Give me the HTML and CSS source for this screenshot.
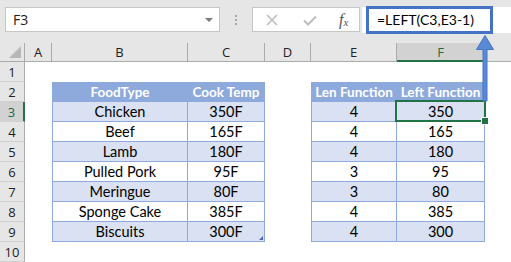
FILE: index.html
```html
<!DOCTYPE html>
<html>
<head>
<meta charset="utf-8">
<link rel="stylesheet" href="styles.css">
</head>
<body>
<div class="app">
  <div class="toolbar">
    <div class="namebox"><span class="nb-text">F3</span><span class="nb-caret"></span></div>
    <div class="dots"><i></i><i></i><i></i></div>
    <div class="fbuttons">
      <svg class="ico-x" width="12" height="12" viewBox="0 0 12 12"><path d="M1 1 L11 11 M11 1 L1 11" stroke="#bdbdbd" stroke-width="1.6" fill="none"/></svg>
      <svg class="ico-check" width="14" height="11" viewBox="0 0 14 11"><path d="M1 5.5 L5 9.5 L13 1.5" stroke="#bdbdbd" stroke-width="2" fill="none"/></svg>
      <span class="fx">f<sub>x</sub></span>
    </div>
    <div class="finput">
      <div class="fbox">=LEFT(C3,E3-1)</div>
    </div>
  </div>
  <div class="sheet">
    <div class="corner"><span class="tri"></span></div>
    <div class="ch">A</div>
    <div class="ch">B</div>
    <div class="ch">C</div>
    <div class="ch">D</div>
    <div class="ch">E</div>
    <div class="ch ch-sel">F</div>
    <div class="ch ch-last"></div>

    <div class="rh">1</div><div></div><div></div><div></div><div></div><div></div><div></div><div></div>

    <div class="rh">2</div><div></div>
    <div class="t th tl">FoodType</div><div class="t th">Cook Temp</div><div></div>
    <div class="t th tl">Len Function</div><div class="t th">Left Function</div><div></div>

    <div class="rh rh-sel">3</div><div></div>
    <div class="t band tl">Chicken</div><div class="t band">350F</div><div></div>
    <div class="t band tl">4</div><div class="t band sel">350</div><div></div>

    <div class="rh">4</div><div></div>
    <div class="t tl">Beef</div><div class="t">165F</div><div></div>
    <div class="t tl">4</div><div class="t">165</div><div></div>

    <div class="rh">5</div><div></div>
    <div class="t band tl">Lamb</div><div class="t band">180F</div><div></div>
    <div class="t band tl">4</div><div class="t band">180</div><div></div>

    <div class="rh">6</div><div></div>
    <div class="t tl">Pulled Pork</div><div class="t">95F</div><div></div>
    <div class="t tl">3</div><div class="t">95</div><div></div>

    <div class="rh">7</div><div></div>
    <div class="t band tl">Meringue</div><div class="t band">80F</div><div></div>
    <div class="t band tl">3</div><div class="t band">80</div><div></div>

    <div class="rh">8</div><div></div>
    <div class="t tl">Sponge Cake</div><div class="t">385F</div><div></div>
    <div class="t tl">4</div><div class="t">385</div><div></div>

    <div class="rh">9</div><div></div>
    <div class="t band tl">Biscuits</div><div class="t band corner-h">300F</div><div></div>
    <div class="t band tl">4</div><div class="t band">300</div><div></div>

    <div class="rh">10</div><div></div><div></div><div></div><div></div><div></div><div></div><div></div>
  </div>
  <svg class="arrow" width="20" height="70" viewBox="0 0 20 70">
    <path d="M10 0.5 L18.5 14.5 L12 14.5 L12 66 L8 66 L8 14.5 L1.5 14.5 Z" fill="#5a8ad5" stroke="#4472c4" stroke-width="1"/>
  </svg>
</div>
</body>
</html>
```
FILE: styles.css
```css
* { box-sizing: border-box; }
html, body { margin: 0; padding: 0; }
body { width: 511px; height: 262px; overflow: hidden; background: #fff; }
.app { position: relative; width: 511px; height: 262px; font-family: "Open Sans", "Noto Sans", sans-serif; }

.toolbar {
  height: 43px;
  background: #e6e6e6;
  display: flex;
  align-items: flex-start;
  padding-top: 7px;
}
.namebox {
  margin-left: 5px;
  width: 215px;
  height: 25px;
  background: #fff;
  border: 1px solid #c6c6c6;
  display: flex;
  align-items: center;
  justify-content: space-between;
  padding: 0 6px 0 7px;
}
.nb-text { font-size: 14px; color: #222; }
.nb-caret {
  width: 0; height: 0;
  border-left: 4px solid transparent;
  border-right: 4px solid transparent;
  border-top: 4px solid #7a7a7a;
}
.dots {
  width: 32px;
  height: 25px;
  display: flex;
  flex-direction: column;
  align-items: center;
  justify-content: center;
  gap: 2px;
}
.dots i { display: block; width: 2px; height: 2px; background: #a8a8a8; }
.fbuttons {
  width: 108px;
  height: 25px;
  background: #fff;
  border: 1px solid #c6c6c6;
  display: flex;
  align-items: center;
  padding-left: 13px;
}
.ico-x { margin-right: 25px; }
.ico-check { margin-right: 22px; margin-top: 1px; }
.fx {
  font-family: "Liberation Serif", serif;
  font-style: italic;
  font-size: 16px;
  color: #555;
  line-height: 1;
}
.fx sub { font-size: 11px; vertical-align: -1px; }
.finput {
  flex: 1;
  height: 26px;
  background: #fff;
  margin-left: 1px;
  display: flex;
  align-items: center;
  border-left: 1px solid #e6e6e6;
}
.fbox {
  margin-left: 4px;
  width: 127px;
  height: 28px;
  margin-top: -1px;
  border: 3px solid #4472c4;
  font-family: Lato, "Open Sans", sans-serif;
  font-size: 14px;
  color: #000;
  padding-left: 8px;
  display: flex;
  align-items: center;
}

.sheet {
  display: grid;
  grid-template-columns: 25px 27px 136px 77px 46px 86px 88px 1fr;
  grid-template-rows: 19px repeat(10, 20px);
}
.corner {
  background: #e6e6e6;
  border-right: 1px solid #ababab;
  border-bottom: 1px solid #ababab;
  position: relative;
  display: flex;
  align-items: flex-end;
  justify-content: flex-end;
  padding: 0 3px 3px 0;
}
.tri {
  width: 0; height: 0;
  border-left: 12px solid transparent;
  border-bottom: 12px solid #b7b7b7;
}
.ch {
  background: #e6e6e6;
  border-right: 1px solid #ababab;
  border-bottom: 1px solid #ababab;
  font-size: 13px;
  color: #222;
  display: flex;
  align-items: center;
  justify-content: center;
}
.ch-sel { background: #d2d2d2; color: #1e6b3f; border-bottom: 2px solid #217346; }
.ch-last { border-right: none; }
.rh {
  background: #e6e6e6;
  border-right: 1px solid #ababab;
  border-bottom: 1px solid #d0d0d0;
  font-size: 13px;
  color: #222;
  display: flex;
  align-items: center;
  justify-content: center;
}
.rh-sel { background: #d2d2d2; color: #1e6b3f; border-right: 2px solid #217346; }

.t {
  font-family: Lato, "Open Sans", sans-serif;
  font-size: 14.5px;
  color: #000;
  display: flex;
  align-items: center;
  justify-content: center;
  border-right: 1px solid #8ea9db;
  border-bottom: 1px solid #8ea9db;
  position: relative;
  white-space: nowrap;
}
.tl { border-left: 1px solid #8ea9db; }
.th { background: #8ea9db; color: #fff; font-weight: bold; font-size: 13.5px; }
.band { background: #d9e1f2; }
.sel::after {
  content: "";
  position: absolute;
  left: -2px; top: -2px; right: -2px; bottom: -1px;
  border: 2px solid #217346;
}
.sel::before {
  content: "";
  position: absolute;
  right: -5px; bottom: -4px;
  width: 6px; height: 6px;
  background: #217346;
  border: 1px solid #fff;
  z-index: 2;
}
.corner-h::after {
  content: "";
  position: absolute;
  right: 1px; bottom: 1px;
  width: 0; height: 0;
  border-left: 4px solid transparent;
  border-bottom: 4px solid #4a66ac;
}
.arrow { position: absolute; left: 475px; top: 35px; }
```
